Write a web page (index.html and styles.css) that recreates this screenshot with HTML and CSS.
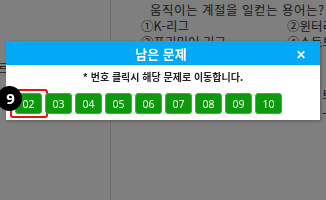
FILE: index.html
```html
<!DOCTYPE html>
<html lang="ko">
<head>
  <meta charset="UTF-8">
  <title>남은 문제</title>
  <link rel="stylesheet" href="styles.css">
</head>
<body>

  <div class="page">
    <div class="side">
      <p class="side-text">-르</p>
    </div>
    <div class="question">
      <p class="q-text">정규 시즌이 끝나고 선수 계약이 활발하게<br>움직이는 계절을 일컫는 용어는?</p>
      <div class="choices">
        <span>①K-리그</span>
        <span>②윈터리그</span>
        <span>③프리미어 리그</span>
        <span>④스토브리그</span>
      </div>
      <p class="next">트<br>-</p>
    </div>
  </div>

  <div class="overlay">
    <div class="modal">
      <div class="modal-head">
        <span class="spacer"></span>
        <span class="modal-title">남은 문제</span>
        <span class="close">&#x2715;</span>
      </div>
      <div class="modal-body">
        <p class="notice">* 번호 클릭시 해당 문제로 이동합니다.</p>
        <div class="numbers">
          <button class="num current">02</button>
          <button class="num">03</button>
          <button class="num">04</button>
          <button class="num">05</button>
          <button class="num">06</button>
          <button class="num">07</button>
          <button class="num">08</button>
          <button class="num">09</button>
          <button class="num">10</button>
        </div>
      </div>
    </div>
  </div>

  <!-- step marker -->
  <div class="step">9</div>

</body>
</html>
```

FILE: styles.css
```css
body {
  margin: 0;
  background-color: #fff;
  font-family: "Noto Sans CJK KR", "Noto Sans", sans-serif;
  color: #333;
  overflow: hidden;
}

/* page behind the popup */
.page {
  display: flex;
  height: 200px;
}

.side {
  flex-shrink: 0;
  width: 110px;
  border-right: 1px solid #dcdcdc;
  padding-top: 59px;
}

.side-text {
  margin: 0 0 0 -6px;
  font-size: 12px;
}

.question {
  padding-left: 30px;
  margin-top: -14px;
  white-space: nowrap;
}

.q-text {
  margin: 0 0 0 9px;
  font-size: 12.5px;
  line-height: 16px;
  letter-spacing: 0.5px;
}

.choices {
  display: grid;
  grid-template-columns: 146px auto;
  font-size: 12.5px;
  line-height: 16px;
}

.next {
  margin: 36px 0 0 181px;
  font-size: 12px;
  line-height: 18px;
}

/* popup */
.overlay {
  position: fixed;
  inset: 0;
  background-color: rgba(0, 0, 0, 0.5);
  padding: 41px 0 0 6px;
}

.modal {
  width: 314px;
  background-color: #fff;
  box-shadow: 1px 1px 3px rgba(0, 0, 0, 0.3);
}

.modal-head {
  display: flex;
  align-items: center;
  height: 24px;
  background-color: #03a9f4;
  color: #fff;
}

.spacer {
  width: 30px;
}

.modal-title {
  flex: 1;
  text-align: center;
  font-size: 13px;
  font-weight: bold;
}

.close {
  width: 30px;
  text-align: center;
  font-size: 12px;
  font-weight: bold;
  padding-right: 4px;
}

.modal-body {
  padding: 5px 0 6px 9px;
}

.notice {
  margin: 0 0 9px 0;
  text-align: center;
  font-size: 10px;
  font-weight: bold;
  line-height: 14px;
  color: #222;
  padding-right: 9px;
}

.numbers {
  display: flex;
  gap: 3px;
}

.num {
  position: relative;
  width: 27px;
  height: 21px;
  padding: 0;
  border: 1px solid #3bb33b;
  border-radius: 3px;
  background-color: #0c9a0c;
  color: #fff;
  font-family: "Noto Sans", sans-serif;
  font-size: 10.5px;
}

.num.current::after {
  content: "";
  position: absolute;
  left: -6px;
  top: -5px;
  width: 34px;
  height: 25px;
  border: 2px solid #f01010;
  border-radius: 3px;
}

.step {
  position: fixed;
  left: -3px;
  top: 86px;
  width: 25px;
  height: 25px;
  border-radius: 50%;
  background-color: #000;
  color: #fff;
  font-family: "Noto Sans", sans-serif;
  font-size: 15px;
  font-weight: bold;
  line-height: 24px;
  text-align: center;
  padding-left: 2px;
  box-sizing: border-box;
}
```
